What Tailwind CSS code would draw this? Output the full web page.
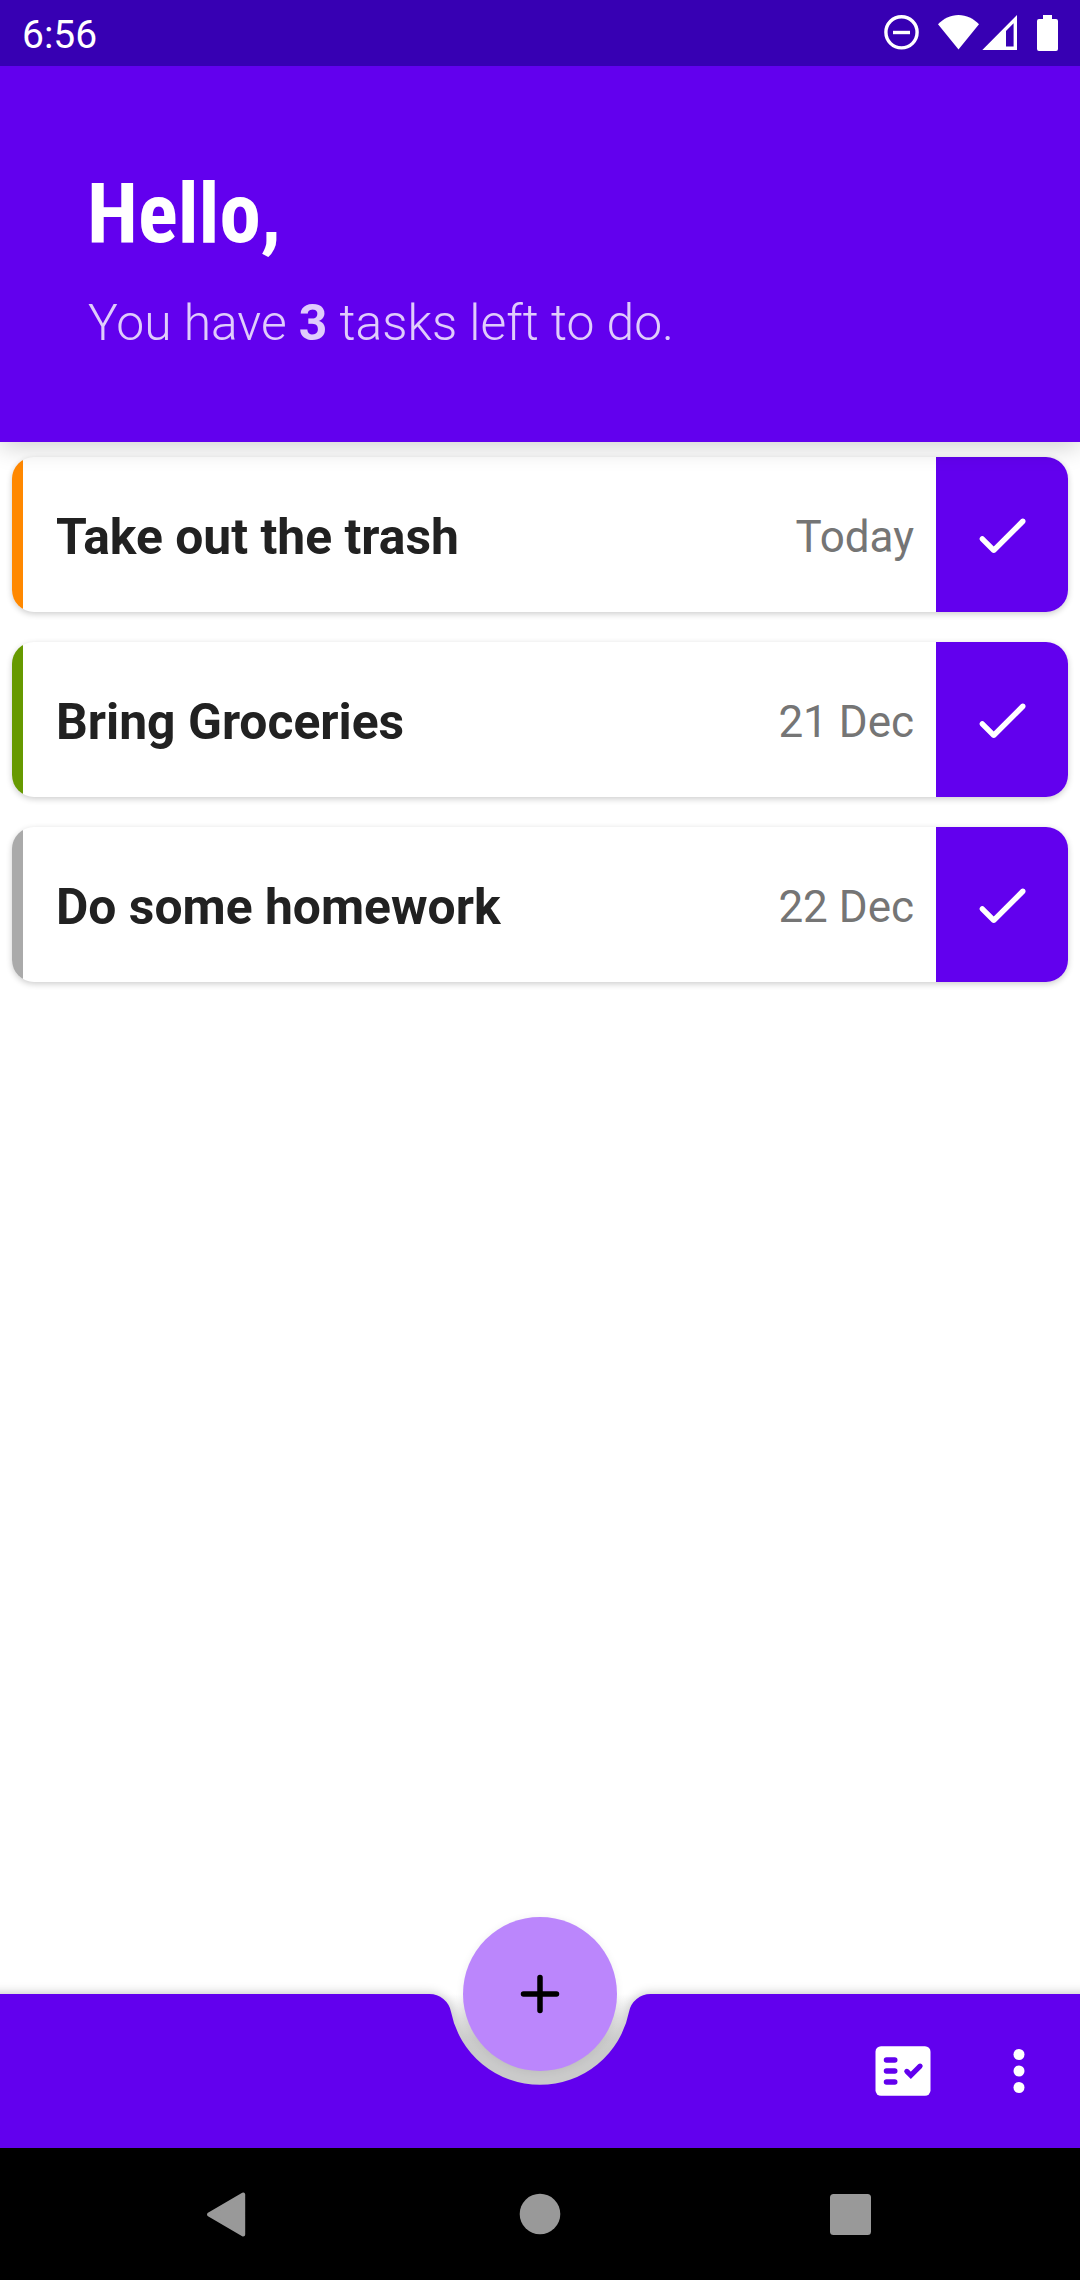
<!DOCTYPE html>
<html lang="en">
<head>
    <meta charset="UTF-8">
    <meta name="viewport" content="width=device-width, initial-scale=1.0">
    <title>Tasks</title>
    <script src="https://cdn.jsdelivr.net/npm/@tailwindcss/browser@4"></script>
</head>
<body class="bg-white font-['Roboto',sans-serif] text-[#212121]">

    <div class="flex flex-col w-[1080px] h-[2280px] overflow-hidden">
        <!-- Status bar -->
        <div class="h-[66px] shrink-0 bg-[#3700b3] flex items-center justify-between text-white relative z-20">
            <span class="pl-[22px] pt-[4px] text-[39px] leading-none">6:56</span>
            <svg class="w-[220px] h-[66px]" viewBox="860 0 220 66" fill="#fff">
                <circle cx="901.5" cy="32.3" r="15.6" fill="none" stroke="#fff" stroke-width="3.4"/>
                <path d="M893 30.8h17v3.4h-17z"/>
                <path d="M958.5 49.5L938 24.3C943.5 18.5 950.5 15 958.5 15s15 3.5 20.5 9.3z"/>
                <path fill-rule="evenodd" d="M1017 15v35h-34.7zM1013.6 23.2L1006 31v15.5h7.6z"/>
                <path d="M1043 15h9v4h4a2 2 0 0 1 2 2v28a2 2 0 0 1-2 2h-17a2 2 0 0 1-2-2v-28a2 2 0 0 1 2-2h4z"/>
            </svg>
        </div>

        <!-- Header -->
        <header class="h-[376px] shrink-0 bg-[#6200ee] pl-[88px] pt-[99px] relative z-10 shadow-[0_4px_24px_rgba(0,0,0,0.2)]">
            <h1 class="-ml-px font-['Roboto_Condensed','Roboto',sans-serif] font-bold text-[83px] leading-[97px] text-white">Hello,</h1>
            <p class="mt-[32px] text-[49.8px] leading-[58px] font-light text-white/80">You have <b class="font-bold">3</b> tasks left to do.</p>
        </header>

        <!-- Task list -->
        <main class="flex-1 px-3 pt-[15px] flex flex-col gap-[30px]">
            <div class="h-[155px] flex items-center rounded-[22px] overflow-hidden bg-white shadow-[0_2px_6px_rgba(0,0,0,0.2)]">
                <span class="w-[11px] h-full bg-[#ff8800]"></span>
                <span class="flex-1 pl-[33px] pt-1.5 text-[49.8px] font-bold">Take out the trash</span>
                <span class="pr-[22px] pt-1 text-[44px] text-[#757575]">Today</span>
                <button class="w-[132px] h-full bg-[#6200ee] flex items-center justify-center">
                    <svg class="w-[66px] h-[66px]" viewBox="0 0 24 24" fill="#fff"><path d="M9 16.17L5.53 12.7c-.39-.39-1.02-.39-1.41 0-.39.39-.39 1.02 0 1.41l4.18 4.18c.39.39 1.02.39 1.41 0L20.29 7.71c.39-.39.39-1.02 0-1.41-.39-.39-1.02-.39-1.41 0L9 16.17z"/></svg>
                </button>
            </div>
            <div class="h-[155px] flex items-center rounded-[22px] overflow-hidden bg-white shadow-[0_2px_6px_rgba(0,0,0,0.2)]">
                <span class="w-[11px] h-full bg-[#669900]"></span>
                <span class="flex-1 pl-[33px] pt-1.5 text-[49.8px] font-bold">Bring Groceries</span>
                <span class="pr-[22px] pt-1 text-[44px] text-[#757575]">21 Dec</span>
                <button class="w-[132px] h-full bg-[#6200ee] flex items-center justify-center">
                    <svg class="w-[66px] h-[66px]" viewBox="0 0 24 24" fill="#fff"><path d="M9 16.17L5.53 12.7c-.39-.39-1.02-.39-1.41 0-.39.39-.39 1.02 0 1.41l4.18 4.18c.39.39 1.02.39 1.41 0L20.29 7.71c.39-.39.39-1.02 0-1.41-.39-.39-1.02-.39-1.41 0L9 16.17z"/></svg>
                </button>
            </div>
            <div class="h-[155px] flex items-center rounded-[22px] overflow-hidden bg-white shadow-[0_2px_6px_rgba(0,0,0,0.2)]">
                <span class="w-[11px] h-full bg-[#aaaaaa]"></span>
                <span class="flex-1 pl-[33px] pt-1.5 text-[49.8px] font-bold">Do some homework</span>
                <span class="pr-[22px] pt-1 text-[44px] text-[#757575]">22 Dec</span>
                <button class="w-[132px] h-full bg-[#6200ee] flex items-center justify-center">
                    <svg class="w-[66px] h-[66px]" viewBox="0 0 24 24" fill="#fff"><path d="M9 16.17L5.53 12.7c-.39-.39-1.02-.39-1.41 0-.39.39-.39 1.02 0 1.41l4.18 4.18c.39.39 1.02.39 1.41 0L20.29 7.71c.39-.39.39-1.02 0-1.41-.39-.39-1.02-.39-1.41 0L9 16.17z"/></svg>
                </button>
            </div>
        </main>

        <!-- Bottom app bar -->
        <footer class="h-[154px] shrink-0 relative flex items-center justify-end">
            <!-- Bar shape with the cradle -->
            <svg class="absolute left-0 bottom-0 w-[1080px] h-[194px]" viewBox="0 -40 1080 194">
                <defs>
                    <linearGradient id="cradle" gradientUnits="userSpaceOnUse" x1="0" y1="0" x2="0" y2="60">
                        <stop offset="0" stop-color="#ccc" stop-opacity="0"/>
                        <stop offset="0.4" stop-color="#ccc" stop-opacity="0.6"/>
                        <stop offset="0.75" stop-color="#ccc"/>
                        <stop offset="1" stop-color="#cacaca"/>
                    </linearGradient>
                    <filter id="blur" x="-10%" y="-50%" width="120%" height="200%"><feGaussianBlur stdDeviation="6"/></filter>
                    <path id="bar" d="M-40 0H429.4A22 22 0 0 1 450.98 17.7A90.75 90.75 0 0 0 629.02 17.7A22 22 0 0 1 650.6 0H1120V154H-40z"/>
                </defs>
                <use href="#bar" filter="url(#blur)" opacity="0.25"/>
                <path d="M440 0H640V100H440z" fill="url(#cradle)"/>
                <use href="#bar" fill="#6200ee"/>
            </svg>
            <button class="absolute left-[463px] -top-[77px] w-[154px] h-[154px] rounded-full bg-[#bb86fc] flex items-center justify-center shadow-[0_1px_8px_rgba(0,0,0,0.07)]">
                <svg class="w-[66px] h-[66px]" viewBox="0 0 24 24" fill="none" stroke="#000" stroke-width="2" stroke-linecap="round"><path d="M12 6v12M6 12h12"/></svg>
            </button>
            <div class="relative flex items-center gap-[50px] pr-7">
                <svg class="w-[66px] h-[66px]" viewBox="0 0 24 24">
                    <rect x="2" y="3" width="20" height="18" rx="2" fill="#fff"/>
                    <path d="M6 8h3M6 12h3M6 16h3" stroke="#6200ee" stroke-width="2" stroke-linecap="round"/>
                    <path d="M13.4 12.15l1.45 1.4 3.35-3.3" fill="none" stroke="#6200ee" stroke-width="1.9" stroke-linecap="round"/>
                </svg>
                <svg class="w-[66px] h-[66px]" viewBox="0 0 24 24" fill="#fff"><circle cx="12" cy="6" r="2"/><circle cx="12" cy="12" r="2"/><circle cx="12" cy="18" r="2"/></svg>
            </div>
        </footer>

        <!-- System navigation -->
        <nav class="h-[132px] shrink-0 bg-black relative">
            <svg class="w-[1080px] h-[132px]" viewBox="0 0 1080 132" fill="#999">
                <path d="M209 66.5L243.2 46.5V86.5z" stroke="#999" stroke-width="4" stroke-linejoin="round"/>
                <circle cx="540" cy="66" r="20.3"/>
                <rect x="830" y="46" width="41" height="41" rx="3.5"/>
            </svg>
        </nav>
    </div>

</body>
</html>
